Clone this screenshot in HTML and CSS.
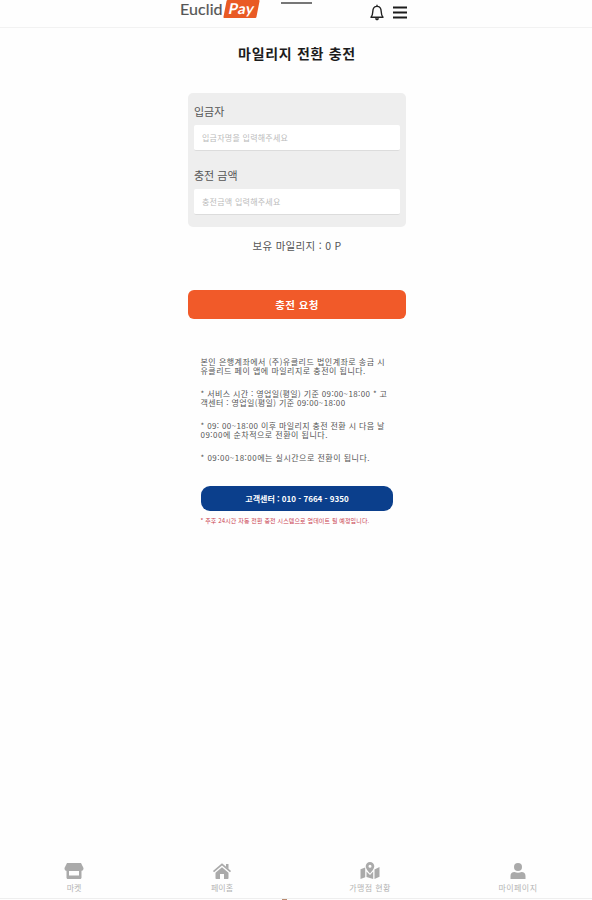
FILE: index.html
```html
<!DOCTYPE html>
<html lang="ko">
<head>
<meta charset="utf-8">
<title>마일리지 전환 충전</title>
<link rel="stylesheet" href="styles.css">
</head>
<body>
<header class="header">
  <div class="header-inner">
    <div class="logo"><span class="logo-name">Euclid</span><span class="logo-badge"><b>Pay</b></span></div>
    <span class="handle"></span>
    <div class="actions">
      <svg class="bell" viewBox="0 0 14 17" fill="none" stroke="#222" stroke-width="1.4" stroke-linejoin="round"><path d="M7 .7v1.6M1 13.3h12c-1.5-1.6-1.7-2.7-1.8-5.8C11.100 4.500 9.300 2.400 7 2.400S2.900 4.500 2.800 7.500C2.700 10.600 2.500 11.700 1 13.300z"/><path d="M5 14.200h4c-.2 1.400-1 2-2 2s-1.800-.6-2-2z" fill="#222" stroke="none"/></svg>
      <svg class="menu" viewBox="0 0 14 13" stroke="#1c1c1c" stroke-width="2"><path d="M0 1.500h14M0 6.500h14M0 11.500h14"/></svg>
    </div>
  </div>
</header>
<main class="page">
  <h1 class="title">마일리지 전환 충전</h1>
  <form class="card">
    <label class="label" for="name">입금자</label>
    <input class="field" id="name" placeholder="입금자명을 입력해주세요">
    <label class="label" for="amount">충전 금액</label>
    <input class="field" id="amount" placeholder="충전금액 입력해주세요">
  </form>
  <p class="balance">보유 마일리지 : 0 P</p>
  <button class="submit">충전 요청</button>
  <section class="notice">
    <p class="loose">본인 은행계좌에서 (주)유클리드 법인계좌로 송금 시</p>
    <p class="loose">유클리드 페이 앱에 마일리지로 충전이 됩니다.</p>
    <p class="gap">* 서비스 시간 : 영업일(평일) 기준 09:00~18:00 * 고</p>
    <p>객센터 : 영업일(평일) 기준 09:00~18:00</p>
    <p class="gap">* 09: 00~18:00 이후 마일리지 충전 전환 시 다음 날</p>
    <p class="loose">09:00에 순차적으로 전환이 됩니다.</p>
    <p class="gap loose">* 09:00~18:00에는 실시간으로 전환이 됩니다.</p>
    <div class="call">고객센터 : 010 - 7664 - 9350</div>
    <p class="red">* 추후 24시간 자동 전환 충전 시스템으로 업데이트 될 예정입니다.</p>
  </section>
</main>
<nav class="tabs">
  <a class="tab"><svg class="icon" viewBox="0 0 20 18"><path d="M3 1h14l2.500 5c.2 2-1 3-2.500 3H3C1.500 9 .300 8 .500 6zM2.500 9H5v4.500h10V9h2.500v6.500c0 .9-.5 1.500-1.400 1.500H3.900c-.9 0-1.400-.6-1.400-1.500z"/></svg><span>마켓</span></a>
  <a class="tab"><svg class="icon" viewBox="0 0 20 18"><path d="M10 5.200l6.500 5.600V16c0 .6-.4 1-1 1H12v-5H8v5H4.500c-.6 0-1-.4-1-1v-5.200z"/><path d="M1.500 9.600L10 2.300l8.500 7.300" fill="none" stroke="#aaa" stroke-width="1.700"/><path d="M14 2h2.500v5L14 5z"/></svg><span>페이홈</span></a>
  <a class="tab"><svg class="icon" viewBox="0 0 20 18"><path fill-rule="evenodd" d="M10 0a4.300 4.300 0 0 1 4.300 4.300C14.300 6.500 12 9.500 10 11.500 8 9.500 5.700 6.500 5.700 4.300A4.300 4.300 0 0 1 10 0zm0 2.800a1.500 1.500 0 1 0 0 3 1.500 1.500 0 0 0 0-3z"/><path d="M.5 7.300l4.700-1.800v9.700L.500 17zM6.500 9.500L10 13l3.200-3.500V17l-6.700-2zM14.500 7.500l5-2.500v9.700l-5 2.300z"/></svg><span class="wide">가맹점 현황</span></a>
  <a class="tab"><svg class="icon" viewBox="0 0 20 18"><circle cx="10" cy="5" r="4"/><path d="M2.500 17v-3c0-2.500 1.500-4 4-4 1 .5 2.200.8 3.500.8s2.500-.3 3.500-.8c2.500 0 4 1.500 4 4v3z"/></svg><span class="wide">마이페이지</span></a>
</nav>
<div class="footer"><i class="peek"></i></div>
</body>
</html>
```
FILE: styles.css
```css
* { box-sizing: border-box; }
body {
  margin: 0;
  height: 900px;
  display: flex;
  flex-direction: column;
  overflow: hidden;
  background: #fefefe;
  color: #555;
  font-family: "Noto Sans CJK KR", sans-serif;
}
p, h1 { margin: 0; white-space: nowrap; }
.header { height: 28px; flex: none; border-bottom: 1px solid #f2f2f2; }
.header-inner { width: 228px; margin-left: 180px; display: flex; justify-content: space-between; align-items: flex-start; }
.logo { display: flex; align-items: flex-start; width: 80px; height: 19px; font-family: Lato, sans-serif; }
.logo-name { font-size: 16px; line-height: 17px; width: 45px; color: #555; letter-spacing: .1px; -webkit-text-stroke: .2px #555; }
.logo-badge { width: 33px; height: 18px; background: #e95a24; color: #fff; font-size: 15px; line-height: 17px; text-align: center; transform: skewX(-11deg); border-radius: 1px; letter-spacing: .4px; }
.handle { width: 31px; height: 2px; margin: 2px 37px 0 0; background: #777; }
.actions { display: flex; gap: 9px; padding: 4px 1px 0 0; }
.bell { width: 14px; height: 17px; }
.menu { width: 14px; height: 13px; margin-top: 2px; }
.page { width: 218px; margin-left: 188px; flex: 1; }
.title { margin-top: 13px; font-size: 14px; line-height: 24px; color: #1c1c1c; text-align: center; letter-spacing: .7px; }
.card { display: flex; flex-direction: column; margin-top: 28px; height: 134px; padding: 10px 6px 0; background: #eee; border-radius: 5px; }
.label { height: 16px; margin-bottom: 6px; font-size: 11px; line-height: 16px; color: #555; }
.field { flex: none; width: 206px; height: 26px; margin: 0 0 16px; padding: 0 8px 1px; border: 0; border-bottom: 1px solid #dcdcdc; border-radius: 2px; background: #fff; font: 8px "Noto Sans CJK KR", sans-serif; letter-spacing: .25px; }
.field::placeholder { color: #bbb; opacity: 1; }
.balance { margin-top: 9px; font-size: 10.500px; line-height: 20px; text-align: center; letter-spacing: .3px; }
.submit { display: block; width: 218px; height: 29px; margin-top: 34px; padding: 0; border: 0; border-radius: 6px; background: #f15a29; color: #fff; font: bold 10.500px "Noto Sans CJK KR", sans-serif; letter-spacing: .4px; }
.notice { margin: 38px 0 0 12.500px; width: 192px; font-size: 8px; line-height: 9px; color: #555; letter-spacing: .37px; }
.loose { letter-spacing: .48px; }
.gap { margin-top: 14px; }
.call { height: 25px; margin-top: 24px; border-radius: 9px; background: #0b3f8c; color: #fff; font-size: 8px; font-weight: bold; line-height: 25px; text-align: center; letter-spacing: 0; padding-left: 1px; }
.red { margin-top: 6px; font-size: 6px; line-height: 8px; color: #c9404f; letter-spacing: .12px; }
.tabs { display: flex; height: 36px; flex: none; }
.tab { flex: 1; display: flex; flex-direction: column; align-items: center; color: #b4b4b4; font-size: 8px; line-height: 12px; }
.wide { letter-spacing: .4px; }
.icon { width: 20px; height: 18px; fill: #aaa; margin-bottom: 2px; }
.footer { height: 2px; flex: none; border-top: 1px solid #eee; display: flex; }
.peek { width: 5px; height: 1px; margin-left: 282px; background: #b98a70; }
```
